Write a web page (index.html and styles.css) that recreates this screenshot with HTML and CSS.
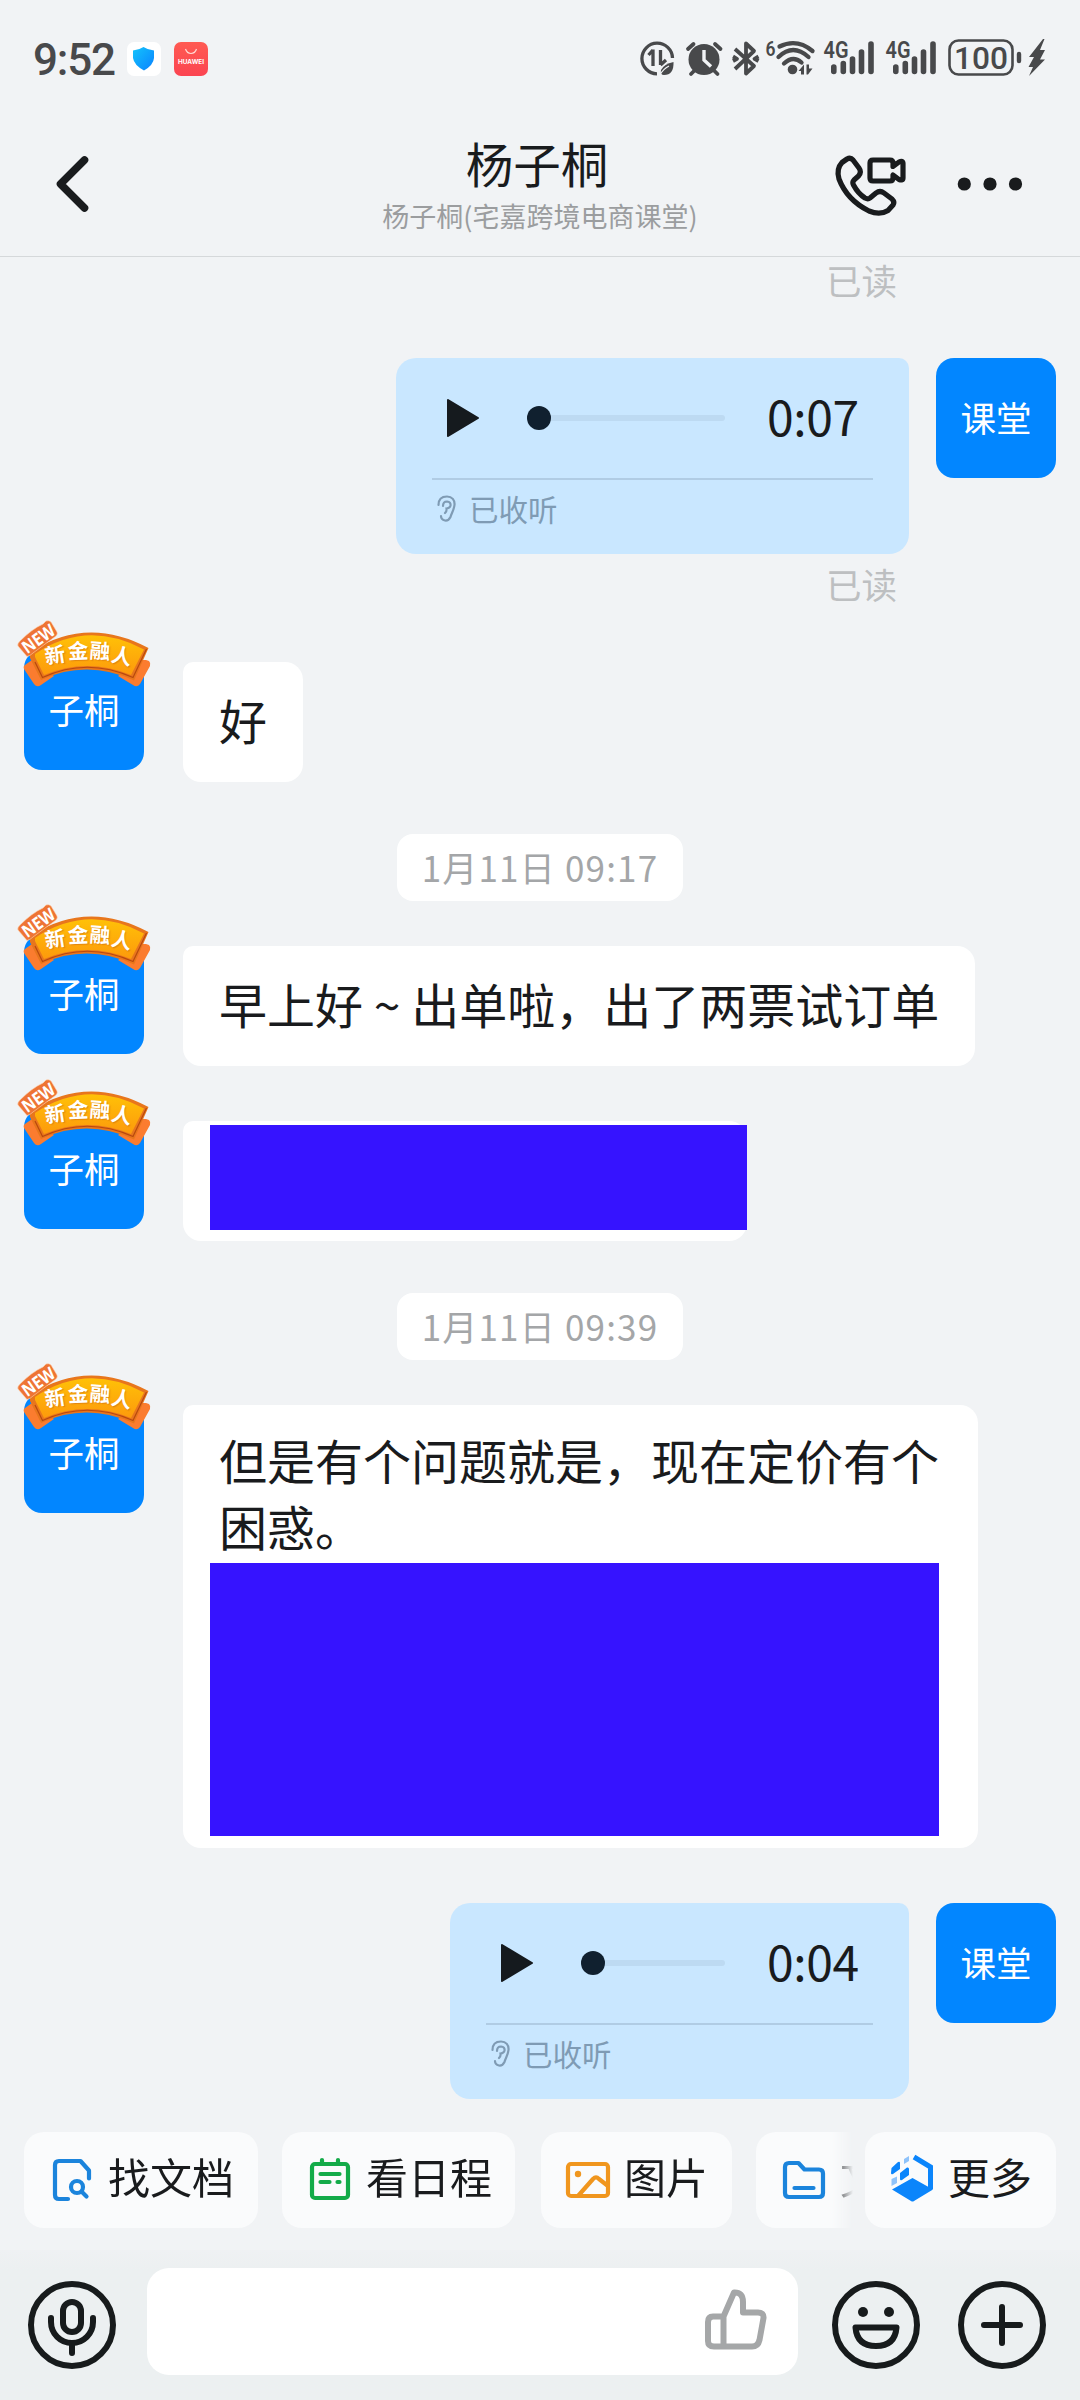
FILE: index.html
```html
<!DOCTYPE html>
<html lang="zh-CN">
<head>
<meta charset="utf-8">
<title>杨子桐</title>
<link rel="stylesheet" href="styles.css">
</head>
<body>
<svg width="0" height="0" class="defs">
  <defs>
    <linearGradient id="gold" x1="0" y1="0" x2="0" y2="1"><stop offset="0" stop-color="#ffc107"/><stop offset="1" stop-color="#fd9a0c"/></linearGradient>
    <linearGradient id="shield" x1="0" y1="0" x2="1" y2="1"><stop offset="0" stop-color="#14c4fb"/><stop offset="1" stop-color="#0a82ff"/></linearGradient>
    <symbol id="badge" viewBox="0 0 150 100">
      <path d="M15 55L22 50L44 66L31 75Q27 78 24 74L14 59Q13 56 15 55Z" fill="#fb7c2f"/>
      <path d="M136 50L139 51Q141 53 140 56L130 74Q127 78 123 75L108 66L128 50Z" fill="#fb7c2f"/>
      <path d="M20 48L31 70Q77 49 124 70.500L138.500 38Q77 5 20 42Z" fill="#e8761c"/>
      <path d="M25 47L34 65Q77 47 121 65L134 39.500Q77 9 25 44Z" fill="url(#gold)"/>
      <path d="M25 52L32.500 67.500Q77 47 123 67.500L136.500 39" fill="none" stroke="#b8480f" stroke-width="1.200"/>
      <path d="M10 31Q7 34 8 36L17 46.500Q20 46 23 43L46 26Q48 24 47 22L41 12Q39 10 36 11L33 14Q22 19 10 31Z" fill="#ee7434" stroke="#ffd2ac" stroke-width="0.600"/>
      <text class="badge-new" x="28.500" y="35" transform="rotate(-35 28.500 29)" textLength="36" lengthAdjust="spacingAndGlyphs">NEW</text>
      <g class="badge-text">
        <text x="45" y="52.500" transform="rotate(-9 45 45)">新</text>
        <text x="68" y="48.500" transform="rotate(-3 68 41)">金</text>
        <text x="90" y="48.500" transform="rotate(4 90 41)">融</text>
        <text x="112" y="53.500" transform="rotate(13 112 46)">人</text>
      </g>
    </symbol>
    <symbol id="ear" viewBox="436 495 22 28">
      <path d="M438.500 506C438.500 500 442 497.500 447 497.500C452 497.500 455 501 454.500 506C454 511 451.500 514 450.500 518Q448.500 522 445 521.500Q441 520.500 441 517M443 507Q443 502.500 447 502.500Q451 503 450.500 506.500Q450 509 446.500 509.500Q447 512 445 514" fill="none" stroke="#7f9bb4" stroke-width="2.200" stroke-linecap="round"/>
    </symbol>
    <symbol id="signal" viewBox="822 38 58 40">
      <text x="823.500" y="57.500" font-family="Roboto, sans-serif" font-weight="600" font-size="23" textLength="25" lengthAdjust="spacingAndGlyphs" fill="#48494b">4G</text>
      <path d="M833.800 67V71.500M843.300 63.500V71.500M852.500 59V71.500M861.500 52V71.500M871 44V71.500" stroke="#48494b" stroke-width="5.600" stroke-linecap="round"/>
    </symbol>
  </defs>
</svg>

<div class="status">
  <span class="clock">9:52</span>
  <span class="app app-guard"><svg width="24" height="26" viewBox="0 0 24 26"><path d="M11.500 1Q16 4 22 4.500V12Q21.500 19 12 24.500Q2 19 1 12V4.500Q7 4 11.500 1Z" fill="url(#shield)"/></svg></span>
  <span class="app app-store"><svg width="34" height="34" viewBox="0 0 34 34"><path d="M11.500 7Q13 11.500 17 11.500Q21 11.500 22.500 7" fill="none" stroke="#ffd9d4" stroke-width="1.200"/><text x="17" y="22" font-size="6" font-weight="700" font-family="Inter, sans-serif" text-anchor="middle" textLength="26" lengthAdjust="spacingAndGlyphs" fill="#fff">HUAWEI</text></svg></span>
  <div class="status-icons">
    <svg width="44" height="40" viewBox="638 38 44 40"><path d="M672.500 58A15.300 15.300 0 1 0 657 73.800M653 49.500V66M653 50L648.500 55M660.500 50V65M660.500 65L666 60" fill="none" stroke="#48494b" stroke-width="3.300"/><path d="M673.500 62Q674 75 664 75Q660 75 661 70Q664 64 673.500 62Z" fill="#48494b"/><path d="M660 75Q663 69 669 66" stroke="#f1f3f5" stroke-width="1.200" fill="none"/></svg>
    <svg width="46" height="40" viewBox="682 38 46 40"><circle cx="704" cy="59.500" r="15.500" fill="#48494b"/><path d="M688 49L693.500 44M720.500 49L715 44M691 74L695 70M717.500 74L713.500 70" stroke="#48494b" stroke-width="3.800" stroke-linecap="round"/><path d="M704 50V60L711 66.500" fill="none" stroke="#f1f3f5" stroke-width="3.400"/></svg>
    <svg width="34" height="40" viewBox="728 38 34 40"><path d="M735 49L754 66L746 73.500V43.500L754 51L735 69M733 56.500L737 58.800L733 61M758.500 56.500L754.500 58.800L758.500 61" fill="none" stroke="#48494b" stroke-width="3.800" stroke-linejoin="round"/></svg>
    <svg width="60" height="40" viewBox="762 38 60 40"><text x="765.500" y="56" font-family="Roboto, sans-serif" font-weight="600" font-size="21" textLength="10" lengthAdjust="spacingAndGlyphs" fill="#48494b">6</text><path d="M779.500 46.500Q797 38 812.500 51M778.500 57Q793 43 808.500 57M784 63.500Q793 55 801.500 62.500" fill="none" stroke="#48494b" stroke-width="4.300" stroke-linecap="round"/><circle cx="792.500" cy="69.500" r="4.800" fill="#48494b"/><path d="M804 64.500V74.500H801V71H798.500ZM806.500 64.500H809V68.500H812.500L808 74.500H806.500Z" fill="#48494b"/></svg>
    <svg width="62" height="40" viewBox="822 38 62 40"><use href="#signal" x="822" y="38" width="58" height="40"/></svg>
    <svg width="62" height="40" viewBox="822 38 62 40"><use href="#signal" x="822" y="38" width="58" height="40"/></svg>
    <svg width="102" height="40" viewBox="946 38 102 40"><rect x="949.500" y="40.500" width="63" height="34" rx="9" fill="none" stroke="#48494b" stroke-width="2.600"/><path d="M1019 54V61" stroke="#48494b" stroke-width="4.400" stroke-linecap="round"/><text x="981" y="69" text-anchor="middle" font-family="Roboto, sans-serif" font-weight="500" font-size="32" textLength="54" lengthAdjust="spacingAndGlyphs" fill="#48494b">100</text><path d="M1043 39L1029 57H1034L1028.500 67H1033L1029 76L1045 59.500H1040L1045 50H1040L1044.500 39Z" fill="#48494b"/></svg>
  </div>
</div>

<header class="header">
  <svg class="back" width="44" height="64" viewBox="50 152 44 64"><path d="M84.500 160L60.500 184L84.500 208" fill="none" stroke="#191b1d" stroke-width="7.600" stroke-linecap="round" stroke-linejoin="round"/></svg>
  <div class="heading">
    <h1>杨子桐</h1>
    <p>杨子桐(宅嘉跨境电商课堂)</p>
  </div>
  <div class="actions">
    <svg width="76" height="64" viewBox="832 152 76 64"><g fill="none" stroke="#191b1d" stroke-width="5.200" stroke-linejoin="round"><path d="M842 162.500L847 159Q850.500 157 853 160L859 168Q862 172 858.500 176L854 180Q852 182 853.500 185Q858 193.500 865 198Q868 199.500 870 198L876 193Q880 190 884 193L892 199Q895 202 893 205L888 210.500Q880 215.500 869 211Q847 200 839 179Q836 169 842 162.500Z"/><path d="M873 160H890Q893 160 893 163V166.500L899 162Q903 160 903 163.500V178Q903 181 899 179.500L893 175V178Q893 181 890 181H873Q870 181 870 178V163Q870 160 873 160Z"/></g></svg>
    <svg width="68" height="16" viewBox="956 176 68 16"><g fill="#191b1d"><circle cx="964.300" cy="184" r="6.600"/><circle cx="990" cy="184" r="6.600"/><circle cx="1015.500" cy="184" r="6.600"/></g></svg>
  </div>
</header>

<main class="chat">
  <div class="read first">已读</div>

  <div class="row out">
    <div class="voice long">
      <div class="player">
        <svg width="36" height="42" viewBox="0 0 36 42"><path d="M3 3L33 21L3 39Z" fill="#151a1e" stroke="#151a1e" stroke-width="2" stroke-linejoin="round"/></svg>
        <span class="track"><i></i></span>
        <time>0:07</time>
      </div>
      <div class="heard"><svg width="22" height="28"><use href="#ear"/></svg>已收听</div>
    </div>
    <div class="avatar">课堂</div>
  </div>
  <div class="read">已读</div>

  <div class="row in r1"><div class="avatar">子桐<svg class="badge"><use href="#badge"/></svg></div><div class="bubble">好</div></div>

  <div class="date">1月11日 09:17</div>

  <div class="row in r2"><div class="avatar">子桐<svg class="badge"><use href="#badge"/></svg></div><div class="bubble">早上好 ~ 出单啦，出了两票试订单</div></div>
  <div class="row in r3"><div class="avatar">子桐<svg class="badge"><use href="#badge"/></svg></div><div class="bubble redacted"><div class="block block-short"></div></div></div>

  <div class="date">1月11日 09:39</div>

  <div class="row in r2"><div class="avatar">子桐<svg class="badge"><use href="#badge"/></svg></div><div class="bubble tall"><p>但是有个问题就是，现在定价有个困惑。</p><div class="block block-tall"></div></div></div>

  <div class="row out last">
    <div class="voice short">
      <div class="player">
        <svg width="36" height="42" viewBox="0 0 36 42"><path d="M3 3L33 21L3 39Z" fill="#151a1e" stroke="#151a1e" stroke-width="2" stroke-linejoin="round"/></svg>
        <span class="track"><i></i></span>
        <time>0:04</time>
      </div>
      <div class="heard"><svg width="22" height="28"><use href="#ear"/></svg>已收听</div>
    </div>
    <div class="avatar">课堂</div>
  </div>
</main>

<nav class="tools">
  <div class="scroller">
    <div class="chip c1"><svg width="42" height="46" viewBox="51 2156 42 46"><g fill="none" stroke="#1b84dc" stroke-width="4.200" stroke-linecap="round" stroke-linejoin="round"><path d="M68 2199H59Q55 2199 55 2195V2165Q55 2161 59 2161H80.500L89 2170.500V2178.500"/><circle cx="77" cy="2187" r="6"/><path d="M81.500 2191.500L86.500 2196.500"/></g></svg><span>找文档</span></div>
    <div class="chip c2"><svg width="42" height="46" viewBox="309 2156 42 46"><g fill="none" stroke="#13ab49" stroke-width="4.200" stroke-linecap="round"><rect x="312" y="2164" width="36" height="34" rx="3"/><path d="M322 2160V2163M338 2160V2163M320.500 2174H339.500M320.500 2182H329.500M337.500 2182H339.500"/></g></svg><span>看日程</span></div>
    <div class="chip c3"><svg width="46" height="46" viewBox="565 2156 46 46"><g fill="none" stroke="#f0961e" stroke-width="4.200" stroke-linejoin="round"><rect x="568" y="2164" width="40" height="32" rx="3"/><path d="M578 2196L593 2179Q596 2176 599 2179L608 2186"/></g><circle cx="578" cy="2174" r="3.200" fill="#f0961e"/></svg><span>图片</span></div>
    <div class="chip c4"><svg width="44" height="46" viewBox="782 2156 44 46"><path d="M789 2163H798.500L804.500 2169.500H819Q823 2169.500 823 2173.500V2193Q823 2197 819 2197H789Q785 2197 785 2193V2167Q785 2163 789 2163ZM794.500 2188H813.500" fill="none" stroke="#1b84dc" stroke-width="4.200" stroke-linecap="round" stroke-linejoin="round"/></svg><span>文件</span></div>
  </div>
  <div class="chip more"><svg width="44" height="50" viewBox="890 2155 44 50"><g fill="#0b85fb"><path d="M892 2190.500L912.500 2179L933 2190.500L914 2202Q912.500 2203 911 2202Z"/><path d="M891.500 2169L898 2163Q900 2162 900 2164V2170L893 2175Q891 2176 891 2174ZM900 2174L907 2168.500Q909 2168 909 2170V2176L902 2181Q900 2182 900 2180Z"/></g><path d="M904 2160L909 2157V2162L904 2165ZM891.500 2180L897 2177.500V2184L891.500 2187Z" fill="#8fc3fa"/><path d="M914 2158L930.500 2168V2190" fill="none" stroke="#0b85fb" stroke-width="5"/></svg><span>更多</span></div>
</nav>

<footer class="composer">
  <svg width="88" height="88" viewBox="28 2281 88 88"><g class="line"><circle cx="72" cy="2325" r="41"/><rect x="63" y="2302" width="18" height="30" rx="9"/><path d="M51 2318V2322A21 21 0 0 0 93 2322V2318M72 2344V2353"/></g></svg>
  <div class="field"><svg width="64" height="64" viewBox="704 2287 64 64"><path d="M723.500 2316.500L734 2292.500Q743 2292 743 2302V2312.500H758Q764 2312.500 763.500 2318L759.500 2340Q758 2346.500 752 2346.500H714Q708 2346.500 708 2341V2322Q708 2316.500 713 2316.500H723.500V2346.500" fill="none" stroke="#a5a7a8" stroke-width="6" stroke-linejoin="round"/></svg></div>
  <svg width="88" height="88" viewBox="832 2281 88 88"><g class="line"><circle cx="876" cy="2325" r="41"/><path d="M855.500 2327.500H896.500Q895 2346 876 2346Q857 2346 855.500 2327.500Z"/></g><circle cx="863" cy="2312" r="5" fill="#171b1c"/><circle cx="889" cy="2312" r="5" fill="#171b1c"/></svg>
  <svg width="88" height="88" viewBox="958 2281 88 88"><g class="line"><circle cx="1002" cy="2325" r="41"/><path d="M984 2325H1020M1002 2307V2343"/></g></svg>
</footer>
</body>
</html>
```
FILE: styles.css
```css
* { box-sizing: border-box; margin: 0; padding: 0; }
body {
  width: 1080px;
  height: 2400px;
  overflow: hidden;
  background: #f1f3f5;
  color: #191b1d;
  font-family: "Noto Sans CJK SC", sans-serif;
  display: flex;
  flex-direction: column;
}
svg { display: block; flex: none; overflow: visible; }
.defs { height: 0; }

.status { height: 118px; flex: none; display: flex; align-items: center; padding-left: 33px; }
.clock { width: 94px; font: 500 44px/50px Roboto, sans-serif; letter-spacing: -1.200px; color: #48494b; padding-top: 1px; }
.app { width: 34px; height: 34px; border-radius: 7px; display: flex; align-items: center; justify-content: center; }
.app-guard { background: #fff; margin-right: 13px; }
.app-store { background: linear-gradient(#ff5a52, #fb4451); }
.status-icons { display: flex; margin: 0 32px 0 auto; padding-bottom: 2px; }

.header { height: 139px; flex: none; border-bottom: 1px solid #d5d8da; display: grid; grid-template-columns: 1fr auto 1fr; align-items: center; padding: 0 54px 6px 50px; }
.heading { text-align: center; padding: 2px 0 0 4px; }
.actions { display: flex; align-items: center; justify-content: flex-end; gap: 48px; margin-right: 2px; }
.heading h1 { font-size: 47.500px; font-weight: 400; line-height: 54px; padding-right: 6px; }
.heading p { font-size: 27px; line-height: 36px; margin-top: 8px; color: #9b9d9f; }

.chat { flex: none; display: flex; flex-direction: column; height: 1875px; }
.read { font-size: 35.500px; line-height: 40px; height: 40px; flex: none; margin-top: 10px; padding-right: 183px; text-align: right; color: #bdbfc1; }
.read.first { margin-top: 3px; }
.row { display: flex; align-items: flex-start; flex: none; }
.out { justify-content: flex-end; padding-right: 24px; gap: 27px; margin-top: 58px; }
.out.last { margin-top: 55px; }
.in { padding-left: 24px; gap: 39px; }
.r1 { margin-top: 46px; }
.r2 { margin-top: 33px; }
.r3 { margin-top: 43px; }
.avatar { position: relative; flex: none; width: 120px; height: 120px; border-radius: 18px; background: #0286ff; color: #fff; font-size: 35.500px; line-height: 117px; text-align: center; }
.badge { position: absolute; left: -14px; top: -40px; width: 150px; height: 100px; }
.badge-new { font-family: "Open Sans", sans-serif; font-size: 17.500px; font-weight: 700; fill: #fff; text-anchor: middle; }
.badge-text { font-family: "Noto Sans CJK SC", sans-serif; font-size: 20.500px; font-weight: 700; fill: #fff; text-anchor: middle; text-shadow: 1px 1px 1px #c8641480; }
.bubble { margin-top: 12px; background: #fff; border-radius: 10px 18px 18px 18px; min-height: 120px; padding: 24px 36px; font-size: 48px; line-height: 66px; white-space: nowrap; }
.redacted { width: 564px; padding: 4px 0 0 27px; }
.block { background: #3613ff; }
.block-short { width: 537px; height: 105px; }
.tall { width: 795px; height: 443px; padding: 21px 0 0 27px; white-space: normal; }
.tall p { padding-left: 9px; width: 732px; height: 137px; }
.block-tall { width: 729px; height: 273px; }

.date { align-self: center; flex: none; width: 286px; height: 67px; margin-top: 52px; border-radius: 16px; background: #fff; color: #a4a6a8; font-size: 35px; letter-spacing: 1.200px; line-height: 65px; text-align: center; white-space: nowrap; }

.voice { height: 196px; border-radius: 20px 10px 20px 20px; background: #c9e7ff; padding: 0 36px; }
.long { width: 513px; }
.short { width: 459px; }
.player { height: 122px; border-bottom: 2px solid #b0cce4; display: flex; align-items: center; padding: 0 13px 0 13px; }
.track { flex: 1; height: 6px; border-radius: 3px; background: #bddaf2; margin: 0 42px 0 46px; }
.track i { display: block; width: 24px; height: 24px; border-radius: 50%; background: #10202f; margin-top: -9px; }
.player time { font-size: 48px; line-height: 70px; width: 93px; margin-top: -7px; letter-spacing: -0.400px; }
.heard { display: flex; align-items: center; gap: 11px; padding: 0 0 3px 4px; height: 59px; font-size: 29.500px; color: #7f9bb4; }

.tools { height: 118px; flex: none; display: flex; padding-left: 24px; }
.scroller { width: 829px; overflow: hidden; display: flex; -webkit-mask-image: linear-gradient(90deg, #000 807px, transparent 829px); mask-image: linear-gradient(90deg, #000 807px, transparent 829px); }
.chip { flex: none; height: 96px; border-radius: 20px; background: #fafbfc; display: flex; align-items: center; font-size: 42px; line-height: 60px; padding: 0 0 4px 27px; }
.chip svg { margin-top: 2px; }
.chip span { padding-bottom: 5px; }
.c1 { width: 234px; margin-right: 24px; gap: 15px; }
.c2 { width: 233px; margin-right: 26px; gap: 15px; }
.c3 { width: 191px; margin-right: 24px; gap: 13px; padding-left: 24px; }
.c4 { width: 191px; gap: 14px; padding-left: 26px; }
.more { width: 191px; margin-left: 12px; gap: 14px; padding-left: 25px; }

.composer { flex: 1; background: linear-gradient(#eff1f3, #ecf0f1 20px); display: flex; align-items: flex-start; padding: 31px 34px 0 28px; }
.field { width: 651px; height: 107px; margin: -13px 34px 0 31px; background: #fff; border-radius: 22px; display: flex; align-items: center; justify-content: flex-end; padding: 0 30px 5px 0; }
.composer > svg:last-child { margin-left: 38px; }
.line { fill: none; stroke: #171b1c; stroke-width: 6px; stroke-linecap: round; stroke-linejoin: round; }
```
